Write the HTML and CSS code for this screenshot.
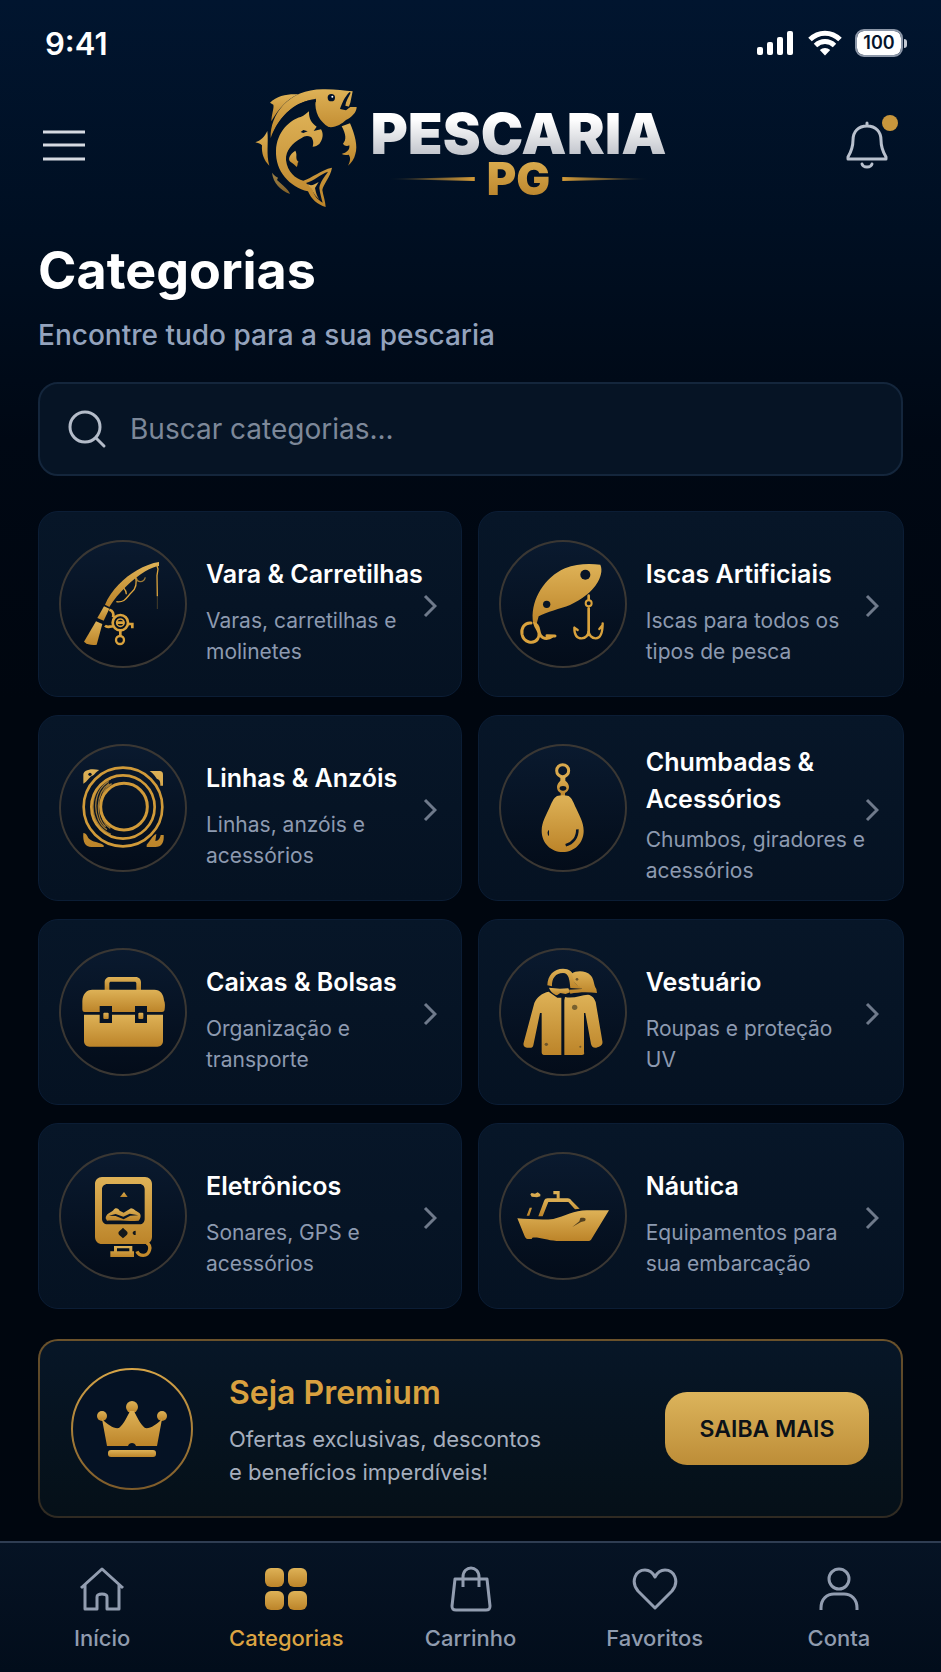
FILE: index.html
```html
<!DOCTYPE html>
<html lang="pt-BR">
<head>
<meta charset="UTF-8">
<meta name="viewport" content="width=device-width, initial-scale=1.0">
<title>Pescaria PG - Categorias</title>
<link rel="stylesheet" href="styles.css">
</head>
<body>

<!-- shared gradients -->
<svg class="defs" width="0" height="0" aria-hidden="true">
  <defs>
    <linearGradient id="gold" x1="0" y1="0" x2="0" y2="1">
      <stop offset="0" stop-color="#deb257"/>
      <stop offset="1" stop-color="#bc8429"/>
    </linearGradient>
    <linearGradient id="ring" x1="0" y1="0" x2="0" y2="1">
      <stop offset="0" stop-color="#d6a447"/>
      <stop offset="1" stop-color="#7d5b2a"/>
    </linearGradient>
  </defs>
</svg>

<div class="status">
  <span class="time">9:41</span>
  <div class="status-icons">
    <svg width="38" height="26" viewBox="0 0 38 26" fill="#fff">
      <rect x="0" y="17" width="6" height="8" rx="2"/>
      <rect x="10" y="12" width="6" height="13" rx="2"/>
      <rect x="20" y="7" width="6" height="18" rx="2"/>
      <rect x="30" y="1" width="6" height="24" rx="2"/>
    </svg>
    <svg width="34" height="26" viewBox="0 0 34 26" fill="none" stroke="#fff" stroke-width="5">
      <path d="M2 9.500C10.500 1 23.500 1 32 9.500"/>
      <path d="M7.500 15.500C13 10.300 21 10.300 26.500 15.500"/>
      <path d="M17 25.500L11.800 20C14.800 17.200 19.200 17.200 22.200 20Z" fill="#fff" stroke="none"/>
    </svg>
    <span class="battery">100</span>
  </div>
</div>

<header class="header">
  <button class="icon-btn" type="button" aria-label="Menu">
    <svg width="42" height="32" viewBox="0 0 42 32" stroke="#d5dae2" stroke-width="3">
      <path d="M0 3H42M0 16H42M0 30H42"/>
    </svg>
  </button>

  <div class="logo">
    <svg class="fish" width="104" height="120" viewBox="42 40 312 360" fill="url(#gold)">
      <path d="M92 190C90 118 148 40 256 44C288 44 314 48 338 50L331 84L326 98C334 95 342 98 350 97C350 114 334 128 318 136C305 148 286 160 266 157C240 142 222 112 227 76C180 72 118 116 92 190Z"/>
      <path d="M90 84C112 62 145 57 175 59C140 74 118 100 94 140C95 118 103 98 100 90Z"/>
      <path d="M46 203C62 198 74 186 82 169C86 205 78 238 88 273C72 258 64 236 66 212C60 205 53 206 46 203Z"/>
      <path d="M108 228C110 172 150 135 182 127C194 124 199 115 207 110C206 132 215 146 230 156L221 169L243 164C252 178 248 196 238 208C232 213 226 216 218 216C222 204 219 193 213 187C202 182 193 184 185 190C156 206 137 228 138 256C142 292 166 312 190 318C216 310 242 286 276 279C271 308 250 328 247 346C250 364 256 380 257 397C232 390 214 374 204 350C148 336 106 290 108 228Z"/>
      <path d="M166 228C148 240 142 254 152 262C160 268 165 271 170 277C175 270 171 263 176 262C163 251 174 242 166 228Z"/>
      <path d="M305 155L330 146C345 180 354 216 346 238C343 253 335 264 324 273C332 258 332 248 326 240C319 242 312 242 305 238C320 234 330 226 328 212C320 216 313 213 309 207C320 196 318 178 305 155Z"/>
      <path d="M96 294C102 302 109 306 114 309L111 316L131 334C141 343 148 351 150 358C120 346 100 325 96 294Z" opacity=".7"/>
      <g fill="#00112a">
        <path d="M94 192C112 130 160 82 228 72L228 82C166 88 116 128 94 192Z" opacity=".9"/>
        <circle cx="274" cy="69" r="11"/>
        <path d="M329 52C314 66 305 88 300 103L318 107L331 97L316 93C317 79 326 68 332 54Z"/>
        <path d="M198 325C222 319 242 298 264 291C254 306 240 322 238 340C240 356 244 370 248 384C232 374 222 364 217 343C212 336 205 331 198 325Z"/>
        <path d="M182 172L190 166L203 170L190 175Z"/>
      </g>
      <path d="M202 329C214 334 222 331 236 322L225 340C228 356 232 366 238 374C222 360 218 350 215 342Z"/>
      <circle cx="277" cy="66" r="3" fill="#fff"/>
    </svg>
    <div class="logo-text">
      <span class="logo-name">PESCARIA</span>
      <span class="logo-sub">PG</span>
    </div>
  </div>

  <button class="icon-btn bell" type="button" aria-label="Notificações">
    <svg width="42" height="48" viewBox="0 0 42 48" fill="none" stroke="#b9c1ce" stroke-width="3" stroke-linejoin="round" stroke-linecap="round">
      <path d="M21 2V5M21 5C12 5 7 11 7 19C7 27 5 31 2 36V38H40V36C37 31 35 27 35 19C35 11 30 5 21 5Z"/>
      <path d="M16 43C17 47 25 47 26 43"/>
    </svg>
    <span class="dot"></span>
  </button>
</header>

<main class="content">
  <h1>Categorias</h1>
  <p class="subtitle">Encontre tudo para a sua pescaria</p>

  <label class="search">
    <svg width="40" height="40" viewBox="0 0 40 40" fill="none" stroke="#b4bcc9" stroke-width="3" stroke-linecap="round">
      <circle cx="18" cy="18" r="15"/>
      <path d="M29 29L37 37"/>
    </svg>
    <input type="search" placeholder="Buscar categorias..." aria-label="Buscar categorias">
  </label>

  <div class="grid">
    <a class="card" href="#">
      <svg class="card-icon" viewBox="66 93 384 384" fill="none" stroke="#d9a23d" stroke-width="6">
        <path d="M366 159V171C355 172 340 178 325 187C285 212 245 250 217 294L204 287C222 244 262 205 300 184C322 171 345 162 366 159Z" fill="url(#gold)" stroke="none"/>
        <path d="M201 292L217 299L200 335L181 327Z" fill="url(#gold)" stroke="none"/>
        <path d="M177 337L196 345L179 407C165 410 150 406 141 398Z" fill="url(#gold)" stroke="none"/>
        <path d="M295 200C300 220 298 238 284 250C270 262 266 282 238 278M260 237C266 243 268 250 268 256" stroke-width="4"/>
        <path d="M298 206C300 222 320 222 325 205" stroke-width="4" opacity=".7"/>
        <path d="M359 168L363 180L360 200L361 262" stroke-width="4"/>
        <path d="M361 262V300" stroke-width="3" opacity=".3"/>
        <path d="M217 302C228 305 231 315 228 325M204 350C212 358 220 350 228 353M274 345H286V358" stroke-width="8"/>
        <circle cx="250" cy="341" r="23" stroke-width="8"/>
        <circle cx="250" cy="341" r="11" stroke-width="5"/>
        <path d="M238 341H262M250 364V382" stroke-width="8"/>
        <circle cx="249" cy="393" r="12" stroke-width="7"/>
      </svg>
      <div class="card-text">
        <h2>Vara &amp; Carretilhas</h2>
        <p>Varas, carretilhas e<br>molinetes</p>
      </div>
      <svg class="chevron" viewBox="0 0 14 24"><path d="M2 2L12 12L2 22"/></svg>
    </a>

    <a class="card" href="#">
      <svg class="card-icon" viewBox="62 93 384 384" fill="none" stroke="#d9a23d" stroke-width="8" stroke-linecap="round">
        <path d="M163 330C160 270 198 205 260 178C295 163 335 164 366 167C374 185 366 205 358 220C340 250 310 272 275 288C245 300 205 308 181 322L174 348L164 342Z" fill="url(#gold)" stroke="none"/>
        <circle cx="321" cy="197" r="15" fill="#071426" stroke="none"/>
        <circle cx="205" cy="286" r="11" fill="#071426" stroke="none"/>
        <path d="M158 342C138 340 128 358 131 376C136 402 166 406 178 390C190 370 174 360 170 345C184 348 178 368 187 380C196 392 212 390 222 382M206 380L230 381" stroke-width="9"/>
        <path d="M331 260V272M331 298V378" stroke-width="8"/>
        <circle cx="331" cy="283" r="9" stroke-width="6"/>
        <path d="M288 356C288 376 296 388 310 388C322 388 331 378 331 366C331 378 340 388 352 388C366 388 373 374 373 343M288 356L298 363M373 348L363 360" stroke-width="7"/>
      </svg>
      <div class="card-text">
        <h2>Iscas Artificiais</h2>
        <p>Iscas para todos os<br>tipos de pesca</p>
      </div>
      <svg class="chevron" viewBox="0 0 14 24"><path d="M2 2L12 12L2 22"/></svg>
    </a>

    <a class="card" href="#">
      <svg class="card-icon" viewBox="66 93 384 384" fill="none" stroke="#d09a39" stroke-width="8">
        <circle cx="258" cy="282" r="118"/>
        <circle cx="258" cy="282" r="95"/>
        <circle cx="261" cy="281" r="70" stroke-width="9"/>
        <path d="M222 198C150 225 150 335 222 364M215 205C162 236 166 324 210 350M216 212C174 240 176 318 206 341M224 212C178 238 180 322 220 346" stroke-width="4" opacity=".75"/>
        <path d="M139 212V185C139 172 160 164 187 171C176 177 172 187 163 190C156 194 152 205 139 212ZM338 174H368C375 174 378 178 378 185V218H370C370 205 368 200 360 198C354 190 350 182 338 174ZM139 360C150 360 151 374 158 379C170 389 190 388 200 397V402H163C145 402 137 388 139 360ZM329 402V395C340 385 345 368 358 363L355 384C365 384 370 374 371 366H380C382 388 374 402 355 402Z" fill="url(#gold)" stroke="none"/>
        <circle cx="159" cy="184" r="5" fill="#071426" stroke="none"/>
      </svg>
      <div class="card-text">
        <h2>Linhas &amp; Anzóis</h2>
        <p>Linhas, anzóis e<br>acessórios</p>
      </div>
      <svg class="chevron" viewBox="0 0 14 24"><path d="M2 2L12 12L2 22"/></svg>
    </a>

    <a class="card card-long" href="#">
      <svg class="card-icon" viewBox="62 93 384 384" fill="url(#gold)">
        <circle cx="253" cy="173" r="18" fill="none" stroke="#d9a94d" stroke-width="9"/>
        <path d="M246 190H261V203C267 207 272 214 272 222C272 231 266 237 260 240V249H247V240C240 237 236 231 236 222C236 214 241 207 246 203Z"/>
        <path d="M236 249C247 246 260 246 271 249C281 255 286 270 293 285C302 305 316 328 316 353C316 390 288 417 253 417C218 417 190 390 190 353C190 328 204 305 213 285C220 270 225 255 236 249Z"/>
        <ellipse cx="254" cy="226" rx="10" ry="7" fill="#071426"/>
        <path d="M297 349C298 372 284 391 262 397" fill="none" stroke="#071426" stroke-width="8"/>
        <path d="M212 350C206 355 206 363 212 370Z" fill="#071426"/>
      </svg>
      <div class="card-text">
        <h2>Chumbadas &amp;<br>Acessórios</h2>
        <p>Chumbos, giradores e<br>acessórios</p>
      </div>
      <svg class="chevron" viewBox="0 0 14 24"><path d="M2 2L12 12L2 22"/></svg>
    </a>

    <a class="card" href="#">
      <svg class="card-icon" viewBox="66 93 384 384" fill="url(#gold)">
        <path d="M203 220V196C203 186 210 180 219 180H296C306 180 312 187 312 196V220H298V199C298 196 296 194 293 194H222C219 194 217 196 217 199V220Z"/>
        <path d="M166 218H352C370 218 380 232 381 250C385 258 384 270 383 277C383 282 380 285 375 285H330V267H294V285H225V267H188V285H143C138 285 136 282 136 277V252C137 232 148 218 166 218Z"/>
        <path d="M141 293H188V318H225V293H294V318H330V293H378V372C378 382 371 389 361 389H158C148 389 141 382 141 372Z"/>
        <rect x="199" y="287" width="16" height="19" rx="3"/>
        <rect x="304" y="287" width="15" height="19" rx="3"/>
      </svg>
      <div class="card-text">
        <h2>Caixas &amp; Bolsas</h2>
        <p>Organização e<br>transporte</p>
      </div>
      <svg class="chevron" viewBox="0 0 14 24"><path d="M2 2L12 12L2 22"/></svg>
    </a>

    <a class="card" href="#">
      <svg class="card-icon" viewBox="62 93 384 384" fill="url(#gold)">
        <path d="M207 205C208 175 226 155 254 155C272 155 284 165 288 180C284 194 290 202 309 211V215L276 213C274 190 272 168 254 168C232 168 220 184 221 208Z"/>
        <path d="M280 170C295 160 322 160 338 176C348 188 346 204 354 216L356 228C330 224 300 225 276 230L272 218L311 216C300 206 288 202 286 190Z"/>
        <path d="M212 212L245 215L270 214L275 226L262 231L246 228L236 235C226 232 215 222 212 212Z"/>
        <path d="M211 224L237 242H249V414H197C192 414 190 410 190 406V288H185L165 385C163 395 155 392 146 392C137 391 134 385 136 377L168 258C175 240 192 228 211 224Z"/>
        <path d="M260 240C286 246 308 234 329 233C342 235 348 244 352 255L372 372C375 385 363 390 354 392C344 393 340 388 338 381L321 288H317V406C319 411 316 414 311 414H258V250Z"/>
        <circle cx="289" cy="271" r="8" fill="#77612f"/>
        <circle cx="204" cy="382" r="5" fill="#6d552a"/>
        <circle cx="306" cy="389" r="3" fill="#6d552a"/>
        <circle cx="296" cy="187" r="4" fill="#6d552a"/>
      </svg>
      <div class="card-text">
        <h2>Vestuário</h2>
        <p>Roupas e proteção<br>UV</p>
      </div>
      <svg class="chevron" viewBox="0 0 14 24"><path d="M2 2L12 12L2 22"/></svg>
    </a>

    <a class="card" href="#">
      <svg class="card-icon" viewBox="66 93 384 384" fill="url(#gold)">
        <path fill-rule="evenodd" d="M195 168H324C336 168 345 177 345 189V347C345 360 336 369 324 369H195C183 369 174 360 174 347V189C174 177 183 168 195 168ZM211 189C202 189 195 196 195 205V294C195 303 202 310 211 310H308C317 310 323 303 323 294V205C323 196 317 189 308 189Z"/>
        <path d="M249 228L261 213L272 228Z"/>
        <path d="M206 292C207 278 220 276 229 268C235 259 242 261 248 269L260 275L282 262C290 262 296 271 306 275C314 280 311 292 305 299C275 301 235 298 210 299Z"/>
        <path d="M216 284L236 279L259 287L278 278L304 283L280 284L260 295L236 285Z" fill="#071426"/>
        <path d="M258 320C263 326 272 330 272 336C272 342 263 346 258 352C253 346 244 342 244 336C244 330 253 326 258 320ZM296 329V342C284 342 284 329 296 329Z" fill="#12171c"/>
        <path d="M231 375H286V391H291V408H220V391H231ZM240 382V391H277V382Z" fill-rule="evenodd"/>
        <path d="M329 366C346 374 338 403 319 403C309 403 303 399 300 391" fill="none" stroke="#c48b2c" stroke-width="10"/>
      </svg>
      <div class="card-text">
        <h2>Eletrônicos</h2>
        <p>Sonares, GPS e<br>acessórios</p>
      </div>
      <svg class="chevron" viewBox="0 0 14 24"><path d="M2 2L12 12L2 22"/></svg>
    </a>

    <a class="card" href="#">
      <svg class="card-icon" viewBox="62 93 384 384" fill="url(#gold)">
        <path d="M117 292C150 294 195 298 225 294C260 286 290 267 328 268L392 268L340 353C338 358 334 360 328 360H235C205 358 185 348 162 350L160 354H148C143 354 141 350 139 346Z"/>
        <path d="M180 286L197 240C199 234 203 232 208 232H268C274 232 277 235 280 239L304 263L290 265L270 243H210L193 286Z"/>
        <path d="M225 210H244V234H235V220H225ZM156 220L160 216L170 218L178 214L186 220V226L176 229L160 227ZM154 260H161L153 284H145Z"/>
        <path d="M306 291C320 289 325 293 320 300L308 303L282 318L303 301Z" fill="#52401f"/>
      </svg>
      <div class="card-text">
        <h2>Náutica</h2>
        <p>Equipamentos para<br>sua embarcação</p>
      </div>
      <svg class="chevron" viewBox="0 0 14 24"><path d="M2 2L12 12L2 22"/></svg>
    </a>
  </div>

  <section class="premium">
    <svg class="premium-icon" width="124" height="124" viewBox="0 0 124 124" fill="url(#gold)">
      <circle cx="62" cy="62" r="60" fill="#051224" stroke="url(#ring)" stroke-width="2"/>
      <circle cx="62" cy="40" r="6"/>
      <circle cx="32" cy="49" r="5"/>
      <circle cx="92" cy="49" r="5"/>
      <path d="M32 52C38 58 44 62 49 61C54 57 58 48 60 44H64C66 48 70 57 75 61C80 62 86 58 92 52L87 79H66C65 75 59 75 58 79H37Z"/>
      <rect x="38" y="83" width="48" height="7" rx="3"/>
    </svg>
    <div class="premium-text">
      <h2>Seja Premium</h2>
      <p>Ofertas exclusivas, descontos<br>e benefícios imperdíveis!</p>
    </div>
    <button class="premium-btn" type="button">SAIBA MAIS</button>
  </section>
</main>

<nav class="nav">
  <a href="#">
    <svg viewBox="0 0 46 46"><path d="M2 22L23 3L44 22M6 19V43H18V31C18 27 28 27 28 31V43H40V19"/></svg>
    <span>Início</span>
  </a>
  <a href="#" class="active">
    <svg viewBox="0 0 46 46">
      <rect x="2" y="2" width="19" height="19" rx="6"/>
      <rect x="25" y="2" width="19" height="19" rx="6"/>
      <rect x="2" y="25" width="19" height="19" rx="6"/>
      <rect x="25" y="25" width="19" height="19" rx="6"/>
    </svg>
    <span>Categorias</span>
  </a>
  <a href="#">
    <svg viewBox="0 0 46 46"><path d="M7 13H39L42 40C42 43 41 44 38 44H8C5 44 4 43 4 40ZM15 21V11C15 -1 31 -1 31 11V21"/></svg>
    <span>Carrinho</span>
  </a>
  <a href="#">
    <svg viewBox="0 0 46 46"><path d="M23 42L6 25C-2 15 4 4 13 4C18 4 21 7 23 11C25 7 28 4 33 4C42 4 48 15 40 25Z"/></svg>
    <span>Favoritos</span>
  </a>
  <a href="#">
    <svg viewBox="0 0 46 46"><circle cx="23" cy="13" r="10"/><path d="M5 44V42C5 33 11 28 18 28H28C35 28 41 33 41 42V44"/></svg>
    <span>Conta</span>
  </a>
</nav>

</body>
</html>
```
FILE: styles.css
```css
* {
  box-sizing: border-box;
}
body {
  margin: 0;
  min-height: 100vh;
  display: flex;
  flex-direction: column;
  font-family: Inter, "Liberation Sans", sans-serif;
  color: #fff;
  background: #00060f linear-gradient(180deg, #01152f 0, #000f22 230px, #000814 440px, #00060f 700px) no-repeat;
}
h1, h2, p {
  margin: 0;
}
a {
  color: inherit;
  text-decoration: none;
}
button {
  font-family: inherit;
  cursor: pointer;
}
.defs {
  position: absolute;
}

/* status bar */
.status {
  display: flex;
  justify-content: space-between;
  align-items: center;
  height: 86px;
  padding: 0 34px 0 45px;
}
.time {
  font-size: 31px;
  font-weight: 600;
}
.status-icons {
  display: flex;
  align-items: center;
  gap: 13px;
}
.battery {
  position: relative;
  width: 48px;
  height: 28px;
  margin-right: 4px;
  border: 2px solid #02122b;
  border-radius: 9px;
  outline: 2px solid #8c97a8;
  outline-offset: -2px;
  background: #fff;
  color: #04142c;
  font-size: 18px;
  font-weight: 600;
  line-height: 24px;
  text-align: center;
}
.battery::after {
  content: "";
  position: absolute;
  right: -6px;
  top: 8px;
  width: 3px;
  height: 9px;
  border-radius: 0 3px 3px 0;
  background: #c5cbd5;
}

/* header */
.header {
  display: flex;
  justify-content: space-between;
  align-items: center;
  height: 118px;
  padding: 0 53px 0 43px;
}
.icon-btn {
  padding: 0;
  border: none;
  background: none;
  line-height: 0;
}
.bell {
  position: relative;
}
.dot {
  position: absolute;
  top: -6px;
  right: -10px;
  width: 16px;
  height: 16px;
  border-radius: 50%;
  background: #c8963c;
}
.logo {
  display: flex;
  align-items: center;
  gap: 12px;
  margin-right: 10px;
  padding-top: 6px;
}
.logo-text {
  display: flex;
  flex-direction: column;
  align-items: center;
  padding-top: 12px;
  font-weight: 900;
}
.logo-name {
  font-size: 57px;
  line-height: 50px;
  background: linear-gradient(#fff 20%, #c3c6cd 90%);
  -webkit-background-clip: text;
  background-clip: text;
  color: transparent;
}
.logo-sub {
  display: flex;
  align-items: center;
  gap: 12px;
  font-size: 45px;
  line-height: 40px;
  background: linear-gradient(#dcae50, #b9832b);
  -webkit-background-clip: text;
  background-clip: text;
  color: transparent;
}
.logo-sub::before,
.logo-sub::after {
  content: "";
  width: 88px;
  height: 4px;
  background: linear-gradient(90deg, transparent, #d49b38);
  clip-path: polygon(0 50%, 100% 0, 100% 100%);
}
.logo-sub::after {
  background: linear-gradient(270deg, transparent, #d49b38);
  clip-path: polygon(0 0, 100% 50%, 0 100%);
}

/* content */
.content {
  padding: 35px 38px 23px;
}
h1 {
  font-size: 52px;
  font-weight: 700;
  line-height: 64px;
}
.subtitle {
  margin-top: 14px;
  color: #94a3bd;
  font-size: 28px;
  font-weight: 500;
  line-height: 36px;
}
.search {
  display: flex;
  align-items: center;
  gap: 23px;
  height: 94px;
  margin-top: 29px;
  padding: 0 27px;
  border: 2px solid #14263c;
  border-radius: 20px;
  background: #061425;
}
.search input {
  flex: 1;
  min-width: 0;
  padding: 0;
  border: none;
  outline: none;
  background: none;
  color: #fff;
  font-family: inherit;
  font-size: 28px;
}
.search input::placeholder {
  color: #7d8899;
  opacity: 1;
}

.grid {
  display: grid;
  grid-template-columns: 1fr 1fr;
  gap: 18px 16px;
  margin-top: 35px;
}
.card {
  display: flex;
  align-items: center;
  min-height: 186px;
  padding: 0 24px 0 20px;
  border: 1px solid #0b1d35;
  border-radius: 20px;
  background: linear-gradient(#071628, #051222);
}
.card-icon {
  flex: none;
  width: 128px;
  height: 128px;
  margin-right: 19px;
  border-radius: 50%;
  background: linear-gradient(#0a1a2f, #030c19);
  box-shadow: inset 0 0 0 2px #3a3733;
}
.card-text {
  flex: 1;
  min-width: 0;
  padding-top: 14px;
  white-space: nowrap;
}
.card h2 {
  margin-bottom: 12px;
  font-size: 25px;
  font-weight: 600;
  line-height: 37px;
}
.card p {
  color: #8d9ab0;
  font-size: 21px;
  line-height: 31px;
}
.card-long h2 {
  margin-bottom: 6px;
}
.chevron {
  flex: none;
  width: 14px;
  height: 24px;
  margin-top: 4px;
  fill: none;
  stroke: #6f7a8b;
  stroke-width: 3;
}

.premium {
  display: flex;
  align-items: center;
  min-height: 179px;
  margin-top: 30px;
  padding: 0 32px 0 30px;
  border: 2px solid transparent;
  border-radius: 20px;
  background:
    linear-gradient(#071627, #051018) padding-box,
    linear-gradient(#6b522b, #2f2a22) border-box;
}
.premium-icon {
  flex: none;
  margin-right: 35px;
}
.premium-text {
  flex: 1;
  padding-top: 5px;
}
.premium h2 {
  color: #d9a13f;
  font-size: 32px;
  font-weight: 600;
  line-height: 40px;
  margin-bottom: 10px;
}
.premium p {
  color: #a5aebd;
  font-size: 22px;
  line-height: 33px;
}
.premium-btn {
  width: 204px;
  height: 73px;
  border: none;
  border-radius: 22px;
  background: linear-gradient(#dcb45c, #bd8d37);
  color: #0b1118;
  font-size: 23px;
  font-weight: 600;
}

/* bottom nav */
.nav {
  display: flex;
  margin-top: auto;
  height: 131px;
  padding: 23px 10px 0;
  border-top: 2px solid #2f3d52;
  background: linear-gradient(#061324, #020d1b);
}
.nav a {
  flex: 1;
  display: flex;
  flex-direction: column;
  align-items: center;
  gap: 12px;
  color: #909caf;
  font-size: 22px;
  font-weight: 500;
  line-height: 28px;
}
.nav svg {
  width: 46px;
  height: 46px;
  fill: none;
  stroke: #929db0;
  stroke-width: 3;
  stroke-linejoin: round;
}
.nav .active {
  color: #dca442;
}
.nav .active svg {
  fill: url(#gold);
  stroke: none;
}
```
